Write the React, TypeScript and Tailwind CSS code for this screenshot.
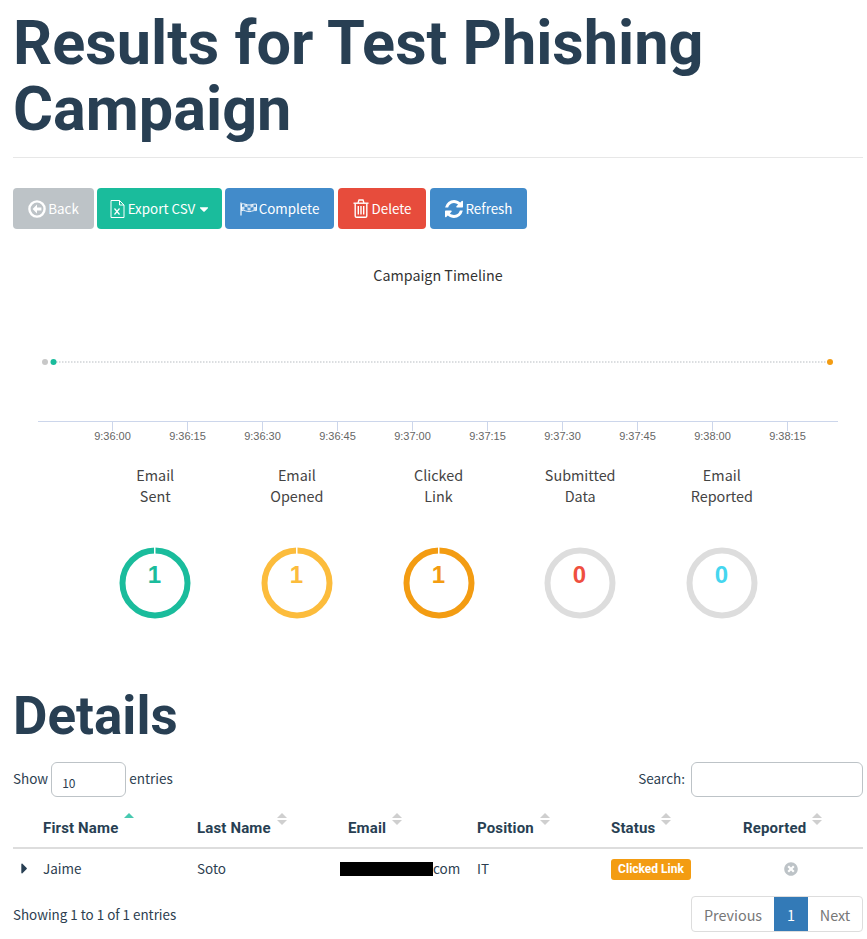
import React from "react";
import { FaCaretDown, FaTimesCircle, FaCaretRight } from "react-icons/fa";

const body = "font-['Noto_Sans_CJK_JP','Noto_Sans',sans-serif]";

function Btn({ className, children }: { className: string; children: React.ReactNode }) {
  return (
    <button className={`flex h-[41px] items-center justify-center rounded-[4px] text-[13.4px] leading-[21px] text-white ${className}`}>
      {children}
    </button>
  );
}

function BackIcon() {
  return (
    <svg width="18" height="18" viewBox="0 0 18 18" fill="none">
      <circle cx="9" cy="9" r="7.6" stroke="#ffffff" strokeWidth="2.4" />
      <path d="M9 4.6 L4.6 9 L9 13.4 V10.6 H13.4 V7.4 H9 Z" fill="#ffffff" />
    </svg>
  );
}

function ExcelIcon() {
  return (
    <svg width="15" height="18" viewBox="0 0 15 18" fill="none" stroke="#ffffff" strokeWidth="1">
      <path d="M1 .5 H9.5 L14 5 V17.5 H1 Z" />
      <path d="M9.5 .5 V5 H14" />
      <path d="M4.5 8.5 L9.5 14.5 M9.5 8.5 L4.5 14.5" strokeWidth="1.2" />
    </svg>
  );
}

function FlagIcon() {
  return (
    <svg width="17" height="14" viewBox="0 0 17 14" fill="none" stroke="#ffffff" strokeWidth="0.9">
      <path d="M1 0.5 V13.5" strokeWidth="1.2" />
      <path d="M1.5 2 C4 0.8 7 3.6 10 3 C12.5 2.5 14.5 1.8 16.5 2.2 V8.6 C14 8.2 12 9.2 10 9.6 C7 10.2 4 7.4 1.5 8.6 Z" />
      <path d="M4.5 2 L7.5 3 V5.6 L4.5 4.6 Z M10.5 3 L13.5 2.2 V5 L10.5 5.8 Z M7.5 5.6 L10.5 5.8 V8.6 L7.5 8.6 Z M1.5 5 L4.5 4.6 V7.6 L1.5 8 Z M13.5 5 L16.5 5 V8 L13.5 8 Z" fill="#ffffff" fillOpacity="0.75" stroke="none" />
    </svg>
  );
}

function TrashIcon() {
  return (
    <svg width="16" height="19" viewBox="0 0 16 19" fill="none" stroke="#ffffff">
      <path d="M.5 4.2 H15.5" strokeWidth="1.4" />
      <path d="M5 4 L6 1 H10 L11 4" strokeWidth="1.3" />
      <path d="M2.2 4.5 V17 Q2.2 18.3 3.5 18.3 H12.5 Q13.8 18.3 13.8 17 V4.5" strokeWidth="1.4" />
      <path d="M5.3 7 V15.5 M8 7 V15.5 M10.7 7 V15.5" strokeWidth="1.4" />
    </svg>
  );
}

function RefreshIcon() {
  return (
    <svg width="18" height="18" viewBox="128 128 1536 1536" fill="#ffffff">
      <path d="M1639 1056q0 5-1 7-64 268-268 434.5t-478 166.5q-146 0-282.5-55t-243.5-157l-129 129q-19 19-45 19t-45-19-19-45v-448q0-26 19-45t45-19h448q26 0 45 19t19 45-19 45l-137 137q71 66 161 102t187 36q134 0 250-65t186-179q11-17 53-117 8-23 30-23h192q13 0 22.5 9.5t9.5 22.5zm25-800v448q0 26-19 45t-45 19h-448q-26 0-45-19t-19-45 19-45l138-138q-148-137-349-137-134 0-250 65t-186 179q-11 17-53 117-8 23-30 23h-199q-13 0-22.5-9.5t-9.5-22.5v-7q65-268 270-434.5t480-166.5q146 0 284 55.5t245 156.5l130-129q19-19 45-19t45 19 19 45z" />
    </svg>
  );
}

const ticks = ["9:36:00", "9:36:15", "9:36:30", "9:36:45", "9:37:00", "9:37:15", "9:37:30", "9:37:45", "9:38:00", "9:38:15"];

function Timeline() {
  return (
    <svg width="850" height="160" viewBox="13 290 850 160" className="block">
      <line x1="53" y1="362" x2="830" y2="362" stroke="#cfd3d6" strokeWidth="1.5" strokeDasharray="1.5 1.5" />
      <circle cx="45" cy="362" r="3" fill="#c8c8c8" />
      <circle cx="53.5" cy="362" r="3" fill="#1abc9c" />
      <circle cx="830" cy="362" r="3" fill="#f39c12" />
      <line x1="38" y1="421.5" x2="838" y2="421.5" stroke="#ccd6eb" />
      {ticks.map((t, i) => (
        <g key={t}>
          <line x1={112.5 + i * 75} y1="421" x2={112.5 + i * 75} y2="431" stroke="#ccd6eb" />
          <text x={112.5 + i * 75} y="440" textAnchor="middle" fontSize="11" fill="#666666" fontFamily="'Liberation Sans', sans-serif">
            {t}
          </text>
        </g>
      ))}
    </svg>
  );
}

function Ring({ color, textColor, value, full }: { color: string; textColor: string; value: string; full: boolean }) {
  const r = 32.5;
  return (
    <svg width="72" height="72" viewBox="0 0 72 72" className="block">
      <circle cx="36" cy="36" r={r} fill="none" stroke={full ? color : "#dddddd"} strokeWidth="6" />
      {full && <rect x="35" y="0" width="1.5" height="7" fill="#ffffff" />}
      <text x="35.5" y="36" textAnchor="middle" fontSize="24" fontWeight="700" fill={textColor} fontFamily="'Liberation Sans', sans-serif">
        {value}
      </text>
    </svg>
  );
}

const stats = [
  { a: "Email", b: "Sent", color: "#1abc9c", text: "#1abc9c", value: "1", full: true },
  { a: "Email", b: "Opened", color: "#fcbc3c", text: "#fcbc3c", value: "1", full: true },
  { a: "Clicked", b: "Link", color: "#f39c12", text: "#f39c12", value: "1", full: true },
  { a: "Submitted", b: "Data", color: "#dddddd", text: "#ef4f3f", value: "0", full: false },
  { a: "Email", b: "Reported", color: "#dddddd", text: "#45d6ef", value: "0", full: false },
];

function Sort({ active }: { active?: boolean }) {
  return (
    <svg width="12" height="14" viewBox="0 0 12 14" className="absolute -top-[6px] -right-[17px]">
      <path d="M1 6 L6 1 L11 6 Z" fill={active ? "#48c9b0" : "#cfcfcf"} />
      {!active && <path d="M1 8 L6 13 L11 8 Z" fill="#cfcfcf" />}
    </svg>
  );
}

const headers: [string, boolean?][] = [["First Name", true], ["Last Name"], ["Email"], ["Position"], ["Status"], ["Reported"]];

export default function App() {
  return (
    <div className={`${body} w-[867px] bg-white pl-[13px] pr-[4px] text-[13.5px] leading-[21px] text-[#2c3e50]`}>
      <h1 className="m-0 pt-[10px] font-['Roboto',sans-serif] text-[61.2px] leading-[66px] font-bold text-[#283f53]">
        Results for Test Phishing Campaign
      </h1>
      <div className="mt-[15px] border-b border-[#e7e7e7]" />

      <div className="mt-[30px] flex gap-[3px]">
        <Btn className="w-[81px] gap-[2px] bg-[#bdc3c7]">
          <BackIcon />
          Back
        </Btn>
        <Btn className="w-[125px] gap-[2px] bg-[#1abc9c] pl-[2px]">
          <ExcelIcon />
          <span className="ml-[1px]">Export CSV</span>
          <FaCaretDown className="text-[14px]" />
        </Btn>
        <Btn className="w-[109px] gap-[2px] bg-[#428bca]">
          <FlagIcon />
          Complete
        </Btn>
        <Btn className="ml-[1px] w-[88px] gap-[3px] bg-[#e74c3c]">
          <TrashIcon />
          Delete
        </Btn>
        <Btn className="ml-[1px] w-[97px] gap-[3px] bg-[#428bca]">
          <RefreshIcon />
          Refresh
        </Btn>
      </div>

      <div className="mt-[35px] text-center text-[14.3px] leading-[21px] text-[#333333]">Campaign Timeline</div>
      <div className="mt-[5px]">
        <Timeline />
      </div>

      <div className="mt-[14px] flex pl-[71.4px]">
        {stats.map((s) => (
          <div key={s.a + s.b} className="flex w-[141.67px] flex-col items-center text-center text-[14.4px] text-[#444444]">
            <div>{s.a}</div>
            <div>{s.b}</div>
            <div className="mt-[41px]">
              <Ring color={s.color} textColor={s.text} value={s.value} full={s.full} />
            </div>
          </div>
        ))}
      </div>

      <h2 className="mt-[68px] font-['Roboto',sans-serif] text-[53px] leading-[59px] font-bold text-[#283f53]">Details</h2>

      <div className="mt-[16px] flex items-start justify-between">
        <div className="flex items-center">
          <span className="-mt-[2px]">Show</span>
          <div className="mx-[3px] h-[35px] w-[75px] rounded-[6px] border border-[#bdc3c7] pt-[9px] pl-[10px] text-[12px] leading-[21px]">10</div>
          <span className="-mt-[2px]">entries</span>
        </div>
        <div className="flex items-center">
          <span className="-mt-[2px]">Search:</span>
          <input className="ml-[6px] h-[35px] w-[172px] rounded-[6px] border border-[#bdc3c7] bg-white" aria-label="Search" />
        </div>
      </div>

      <table className="w-[850px] table-fixed border-collapse">
        <colgroup>
          <col className="w-[30px]" />
          <col className="w-[154px]" />
          <col className="w-[151px]" />
          <col className="w-[129px]" />
          <col className="w-[134px]" />
          <col className="w-[132px]" />
          <col className="w-[120px]" />
        </colgroup>
        <thead>
          <tr className="border-b-2 border-[#dddddd]">
            <th />
            {headers.map(([h, active]) => (
              <th key={h} className="pt-[21px] pb-[8px] text-left font-['Roboto',sans-serif] text-[15px] leading-[21px] font-bold tracking-[0.15px] text-[#283f53]">
                <span className="relative inline-block">
                  {h}
                  <Sort active={active} />
                </span>
              </th>
            ))}
          </tr>
        </thead>
        <tbody>
          <tr>
            <td className="py-[8px] pl-[3px]">
              <FaCaretRight className="text-[17px] text-[#283f53]" />
            </td>
            <td className="py-[8px]">Jaime</td>
            <td className="py-[8px]">Soto</td>
            <td className="py-[8px]">
              <span className="-ml-[8px] flex items-center">
                <span className="h-[14px] w-[93px] bg-black" />
                <span>com</span>
              </span>
            </td>
            <td className="py-[8px]">IT</td>
            <td className="py-[8px]">
              <span className="inline-flex h-[21px] w-[80px] items-center justify-center rounded-[3px] bg-[#f39c12] font-['Roboto',sans-serif] text-[12px] font-bold text-white">
                Clicked Link
              </span>
            </td>
            <td className="py-[8px]">
              <FaTimesCircle className="ml-[41px] text-[14px] text-[#bdc3c7]" />
            </td>
          </tr>
        </tbody>
      </table>

      <div className="mt-[8px] flex items-center justify-between pb-[7px]">
        <span className="text-[13.4px]">Showing 1 to 1 of 1 entries</span>
        <div className="flex h-[36px] overflow-hidden rounded-[4px] border border-[#dddddd] text-[14.4px] text-[#777777]">
          <span className="flex w-[82px] items-center justify-center">Previous</span>
          <span className="flex w-[34px] items-center justify-center bg-[#337ab7] text-white">1</span>
          <span className="flex w-[54px] items-center justify-center">Next</span>
        </div>
      </div>
    </div>
  );
}
